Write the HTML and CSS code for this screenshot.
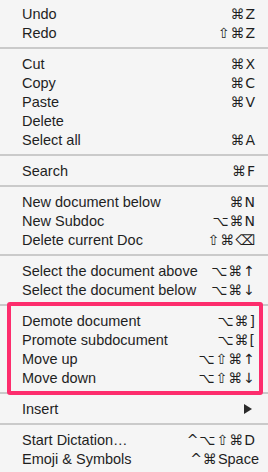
FILE: index.html
```html
<!DOCTYPE html>
<html>
<head>
<meta charset="utf-8">
<link rel="stylesheet" href="styles.css">
</head>
<body>
<div class="menu">
  <div class="item"><span class="label">Undo</span><span class="keys">⌘Z</span></div>
  <div class="item"><span class="label">Redo</span><span class="keys">⇧⌘Z</span></div>
  <div class="sep"></div>
  <div class="item"><span class="label">Cut</span><span class="keys">⌘X</span></div>
  <div class="item"><span class="label">Copy</span><span class="keys">⌘C</span></div>
  <div class="item"><span class="label">Paste</span><span class="keys">⌘V</span></div>
  <div class="item"><span class="label">Delete</span><span class="keys"></span></div>
  <div class="item"><span class="label">Select all</span><span class="keys">⌘A</span></div>
  <div class="sep"></div>
  <div class="item"><span class="label">Search</span><span class="keys">⌘F</span></div>
  <div class="sep"></div>
  <div class="item"><span class="label">New document below</span><span class="keys">⌘N</span></div>
  <div class="item"><span class="label">New Subdoc</span><span class="keys">⌥⌘N</span></div>
  <div class="item"><span class="label">Delete current Doc</span><span class="keys">⇧⌘⌫</span></div>
  <div class="sep"></div>
  <div class="item"><span class="label">Select the document above</span><span class="keys">⌥⌘↑</span></div>
  <div class="item"><span class="label">Select the document below</span><span class="keys">⌥⌘↓</span></div>
  <div class="sep"></div>
  <div class="group">
    <div class="item"><span class="label">Demote document</span><span class="keys">⌥⌘]</span></div>
    <div class="item"><span class="label">Promote subdocument</span><span class="keys">⌥⌘[</span></div>
    <div class="item"><span class="label">Move up</span><span class="keys">⌥⇧⌘↑</span></div>
    <div class="item"><span class="label">Move down</span><span class="keys">⌥⇧⌘↓</span></div>
  </div>
  <div class="sep"></div>
  <div class="item"><span class="label">Insert</span><svg class="arrow" width="8" height="10" viewBox="0 0 8 10"><path d="M0 0 L8 5 L0 10 Z" fill="#2a2a2a"/></svg></div>
  <div class="sep"></div>
  <div class="item"><span class="label">Start Dictation…</span><span class="keys">^⌥⇧⌘D</span></div>
  <div class="item"><span class="label">Emoji &amp; Symbols</span><span class="keys">^⌘<span class="word">Space</span></span></div>
</div>
</body>
</html>
```
FILE: styles.css
```css
html, body {
  margin: 0;
  padding: 0;
  background: #f5f5f5;
}
.menu {
  width: 268px;
  height: 472px;
  box-sizing: border-box;
  padding: 4px 0;
  display: flex;
  flex-direction: column;
  font-family: "Liberation Sans", Arial, sans-serif;
  font-size: 14.5px;
  color: #1f1f1f;
}
.item {
  height: 19px;
  display: flex;
  align-items: center;
  justify-content: space-between;
  padding: 0 13px 0 22px;
}
.keys {
  font-family: "DejaVu Sans", sans-serif;
  font-size: 14px;
  letter-spacing: 1px;
  margin-right: -1px;
}
.word {
  font-family: "Liberation Sans", Arial, sans-serif;
  font-size: 14.5px;
  letter-spacing: 0;
  margin-right: -3px;
}
.arrow {
  margin-right: 3px;
}
.sep {
  height: 12px;
  display: flex;
  flex-direction: column;
  justify-content: center;
}
.sep::before {
  content: "";
  display: block;
  height: 2px;
  background: #cacaca;
}
.group {
  position: relative;
}
.group::after {
  content: "";
  position: absolute;
  left: 7px;
  right: 5px;
  top: -9px;
  bottom: -8px;
  border: 4px solid #fd2d6d;
  border-radius: 3px;
}
```
